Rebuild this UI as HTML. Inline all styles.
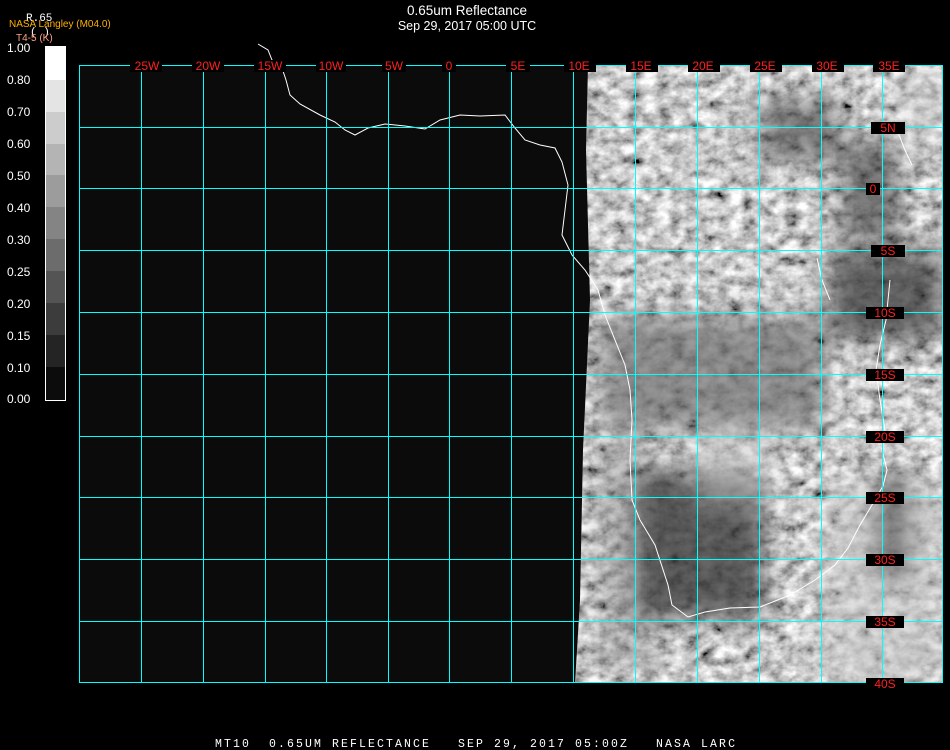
<!DOCTYPE html>
<html><head><meta charset="utf-8"><style>
html,body{margin:0;padding:0;background:#000;width:950px;height:750px;overflow:hidden}
svg{display:block}
text{font-family:"Liberation Sans",sans-serif}
.m{font-family:"Liberation Mono",monospace}
</style></head><body>
<svg width="950" height="750" viewBox="0 0 950 750" xmlns="http://www.w3.org/2000/svg">
<defs>
<filter id="n" x="0" y="0" width="100%" height="100%">
<feTurbulence type="fractalNoise" baseFrequency="0.07 0.09" numOctaves="5" seed="11"/>
<feColorMatrix type="matrix" values="0.5 0.5 0 0 0  0.5 0.5 0 0 0  0.5 0.5 0 0 0  0 0 0 0 1"/>
<feComponentTransfer><feFuncR type="linear" slope="2.0" intercept="-0.42"/><feFuncG type="linear" slope="2.0" intercept="-0.42"/><feFuncB type="linear" slope="2.0" intercept="-0.42"/></feComponentTransfer>
</filter>
<filter id="b" x="-20%" y="-20%" width="140%" height="140%"><feGaussianBlur stdDeviation="13"/></filter>
<clipPath id="c"><polygon points="588,65 943,65 943,683 575,683 580,600 583,450 590,300 586,150"/></clipPath>
</defs>
<rect width="950" height="750" fill="#000"/>
<rect x="79" y="65" width="864" height="618" fill="#0b0b0b"/>
<g clip-path="url(#c)">
<rect x="570" y="65" width="380" height="620" filter="url(#n)"/>
<g filter="url(#b)">
<rect x="600" y="315" width="225" height="115" fill="#6c6c6c" opacity=".7"/>
<rect x="760" y="100" width="80" height="60" fill="#3a3a3a" opacity=".6"/>
<rect x="840" y="140" width="60" height="100" fill="#303030" opacity=".6"/>
<rect x="830" y="250" width="113" height="90" fill="#2c2c2c" opacity=".7"/>
<rect x="595" y="440" width="60" height="230" fill="#808080" opacity=".4"/>
<rect x="635" y="470" width="130" height="150" fill="#303030" opacity=".75"/>
<rect x="700" y="430" width="70" height="70" fill="#d0d0d0" opacity=".5"/>
<rect x="825" y="480" width="118" height="203" fill="#c8c8c8" opacity=".6"/>
<rect x="875" y="470" width="35" height="110" fill="#303030" opacity=".6"/>
<rect x="900" y="70" width="43" height="80" fill="#d0d0d0" opacity=".5"/>
</g>
</g>
<polyline fill="none" stroke="#fff" stroke-width="1" points="258,44 268,50 272,60 282,68 286,80 290,95 300,104 320,115 335,122 345,130 355,135 368,128 385,124 405,126 425,129 440,120 460,115 480,116 505,115 515,128 525,140 540,145 555,148 562,162 568,185 565,210 562,235 572,255 585,270 598,290 605,315 615,340 625,365 630,390 632,420 630,460 632,500 640,520 655,545 668,585 672,605 688,617 705,612 730,608 760,607 790,595 815,580 835,565 848,548 860,525 875,500 883,486 887,470 882,450 885,430 880,400 876,370 880,345 886,320 890,280"/>
<polyline fill="none" stroke="#fff" points="817,258 822,280 830,300"/>
<polyline fill="none" stroke="#fff" points="897,130 905,150 912,165"/>
<g stroke="#00ffff" stroke-width="1" fill="none">
<rect x="79.5" y="65.5" width="863" height="617"/>
<path d="M141.5 65V683M203.5 65V683M265.5 65V683M326.5 65V683M388.5 65V683M449.5 65V683M511.5 65V683M573.5 65V683M635.5 65V683M697.5 65V683M759.5 65V683M821.5 65V683M882.5 65V683"/>
<path d="M79 127.5H943M79 188.5H943M79 250.5H943M79 312.5H943M79 374.5H943M79 436.5H943M79 497.5H943M79 559.5H943M79 621.5H943"/>
</g>
<g fill="#000">
<rect x="130" y="60" width="32" height="12"/><rect x="192" y="60" width="32" height="12"/><rect x="254" y="60" width="32" height="12"/><rect x="316" y="60" width="30" height="12"/><rect x="382" y="60" width="24" height="12"/><rect x="442" y="60" width="14" height="12"/><rect x="506" y="60" width="24" height="12"/><rect x="564" y="60" width="32" height="12"/><rect x="626" y="60" width="32" height="12"/><rect x="688" y="60" width="32" height="12"/><rect x="750" y="60" width="32" height="12"/><rect x="812" y="60" width="32" height="12"/><rect x="873" y="60" width="32" height="12"/>
<rect x="871" y="122" width="34" height="12"/><rect x="866" y="183" width="14" height="12"/><rect x="871" y="245" width="34" height="12"/><rect x="866" y="307" width="38" height="12"/><rect x="866" y="369" width="38" height="12"/><rect x="866" y="431" width="38" height="12"/><rect x="866" y="492" width="38" height="12"/><rect x="866" y="554" width="38" height="12"/><rect x="866" y="616" width="38" height="12"/><rect x="866" y="678" width="38" height="12"/>
</g>
<g class="m" font-size="12" fill="#ff2020" text-anchor="middle">
<text x="147" y="70">25W</text><text x="208" y="70">20W</text><text x="270" y="70">15W</text><text x="331" y="70">10W</text><text x="394" y="70">5W</text><text x="449" y="70">0</text><text x="518" y="70">5E</text><text x="579" y="70">10E</text><text x="641" y="70">15E</text><text x="703" y="70">20E</text><text x="765" y="70">25E</text><text x="827" y="70">30E</text><text x="889" y="70">35E</text>
<text x="888" y="132">5N</text><text x="873" y="193">0</text><text x="888" y="255">5S</text><text x="885" y="317">10S</text><text x="885" y="379">15S</text><text x="885" y="441">20S</text><text x="885" y="502">25S</text><text x="885" y="564">30S</text><text x="885" y="626">35S</text><text x="885" y="688">40S</text>
</g>
<text x="467" y="15" fill="#fff" font-size="13.5" text-anchor="middle">0.65um Reflectance</text>
<text x="467" y="30" fill="#fff" font-size="12.5" text-anchor="middle">Sep 29, 2017 05:00 UTC</text>
<text x="26" y="21" fill="#fff" class="m" font-size="11">R.65</text>
<text x="30" y="35" fill="#fff" class="m" font-size="11">(  )</text>
<text x="9" y="27" fill="#ffb000" font-size="10">NASA Langley (M04.0)</text>
<text x="16" y="41" fill="#ffa080" font-size="10">T4-5 (K)</text>
<g>
<rect x="46" y="47" width="19" height="33" fill="#fff"/>
<rect x="46" y="80" width="19" height="32" fill="#e4e4e4"/>
<rect x="46" y="112" width="19" height="32" fill="#cccccc"/>
<rect x="46" y="144" width="19" height="31" fill="#b4b4b4"/>
<rect x="46" y="175" width="19" height="32" fill="#9c9c9c"/>
<rect x="46" y="207" width="19" height="32" fill="#848484"/>
<rect x="46" y="239" width="19" height="32" fill="#6c6c6c"/>
<rect x="46" y="271" width="19" height="32" fill="#545454"/>
<rect x="46" y="303" width="19" height="32" fill="#3c3c3c"/>
<rect x="46" y="335" width="19" height="32" fill="#242424"/>
<rect x="46" y="367" width="19" height="33" fill="#0c0c0c"/>
<rect x="45.5" y="46.5" width="20" height="354" fill="none" stroke="#fff"/>
</g>
<g class="m" font-size="12" fill="#fff">
<text x="7" y="52">1.00</text><text x="7" y="84">0.80</text><text x="7" y="116">0.70</text><text x="7" y="148">0.60</text><text x="7" y="180">0.50</text><text x="7" y="212">0.40</text><text x="7" y="244">0.30</text><text x="7" y="276">0.25</text><text x="7" y="308">0.20</text><text x="7" y="340">0.15</text><text x="7" y="372">0.10</text><text x="7" y="403">0.00</text>
</g>
<text x="215" y="747" class="m" font-size="11.5" fill="#fff" letter-spacing="2.1" xml:space="preserve">MT10  0.65UM REFLECTANCE   SEP 29, 2017 05:00Z   NASA LARC</text>
</svg>
</body></html>
